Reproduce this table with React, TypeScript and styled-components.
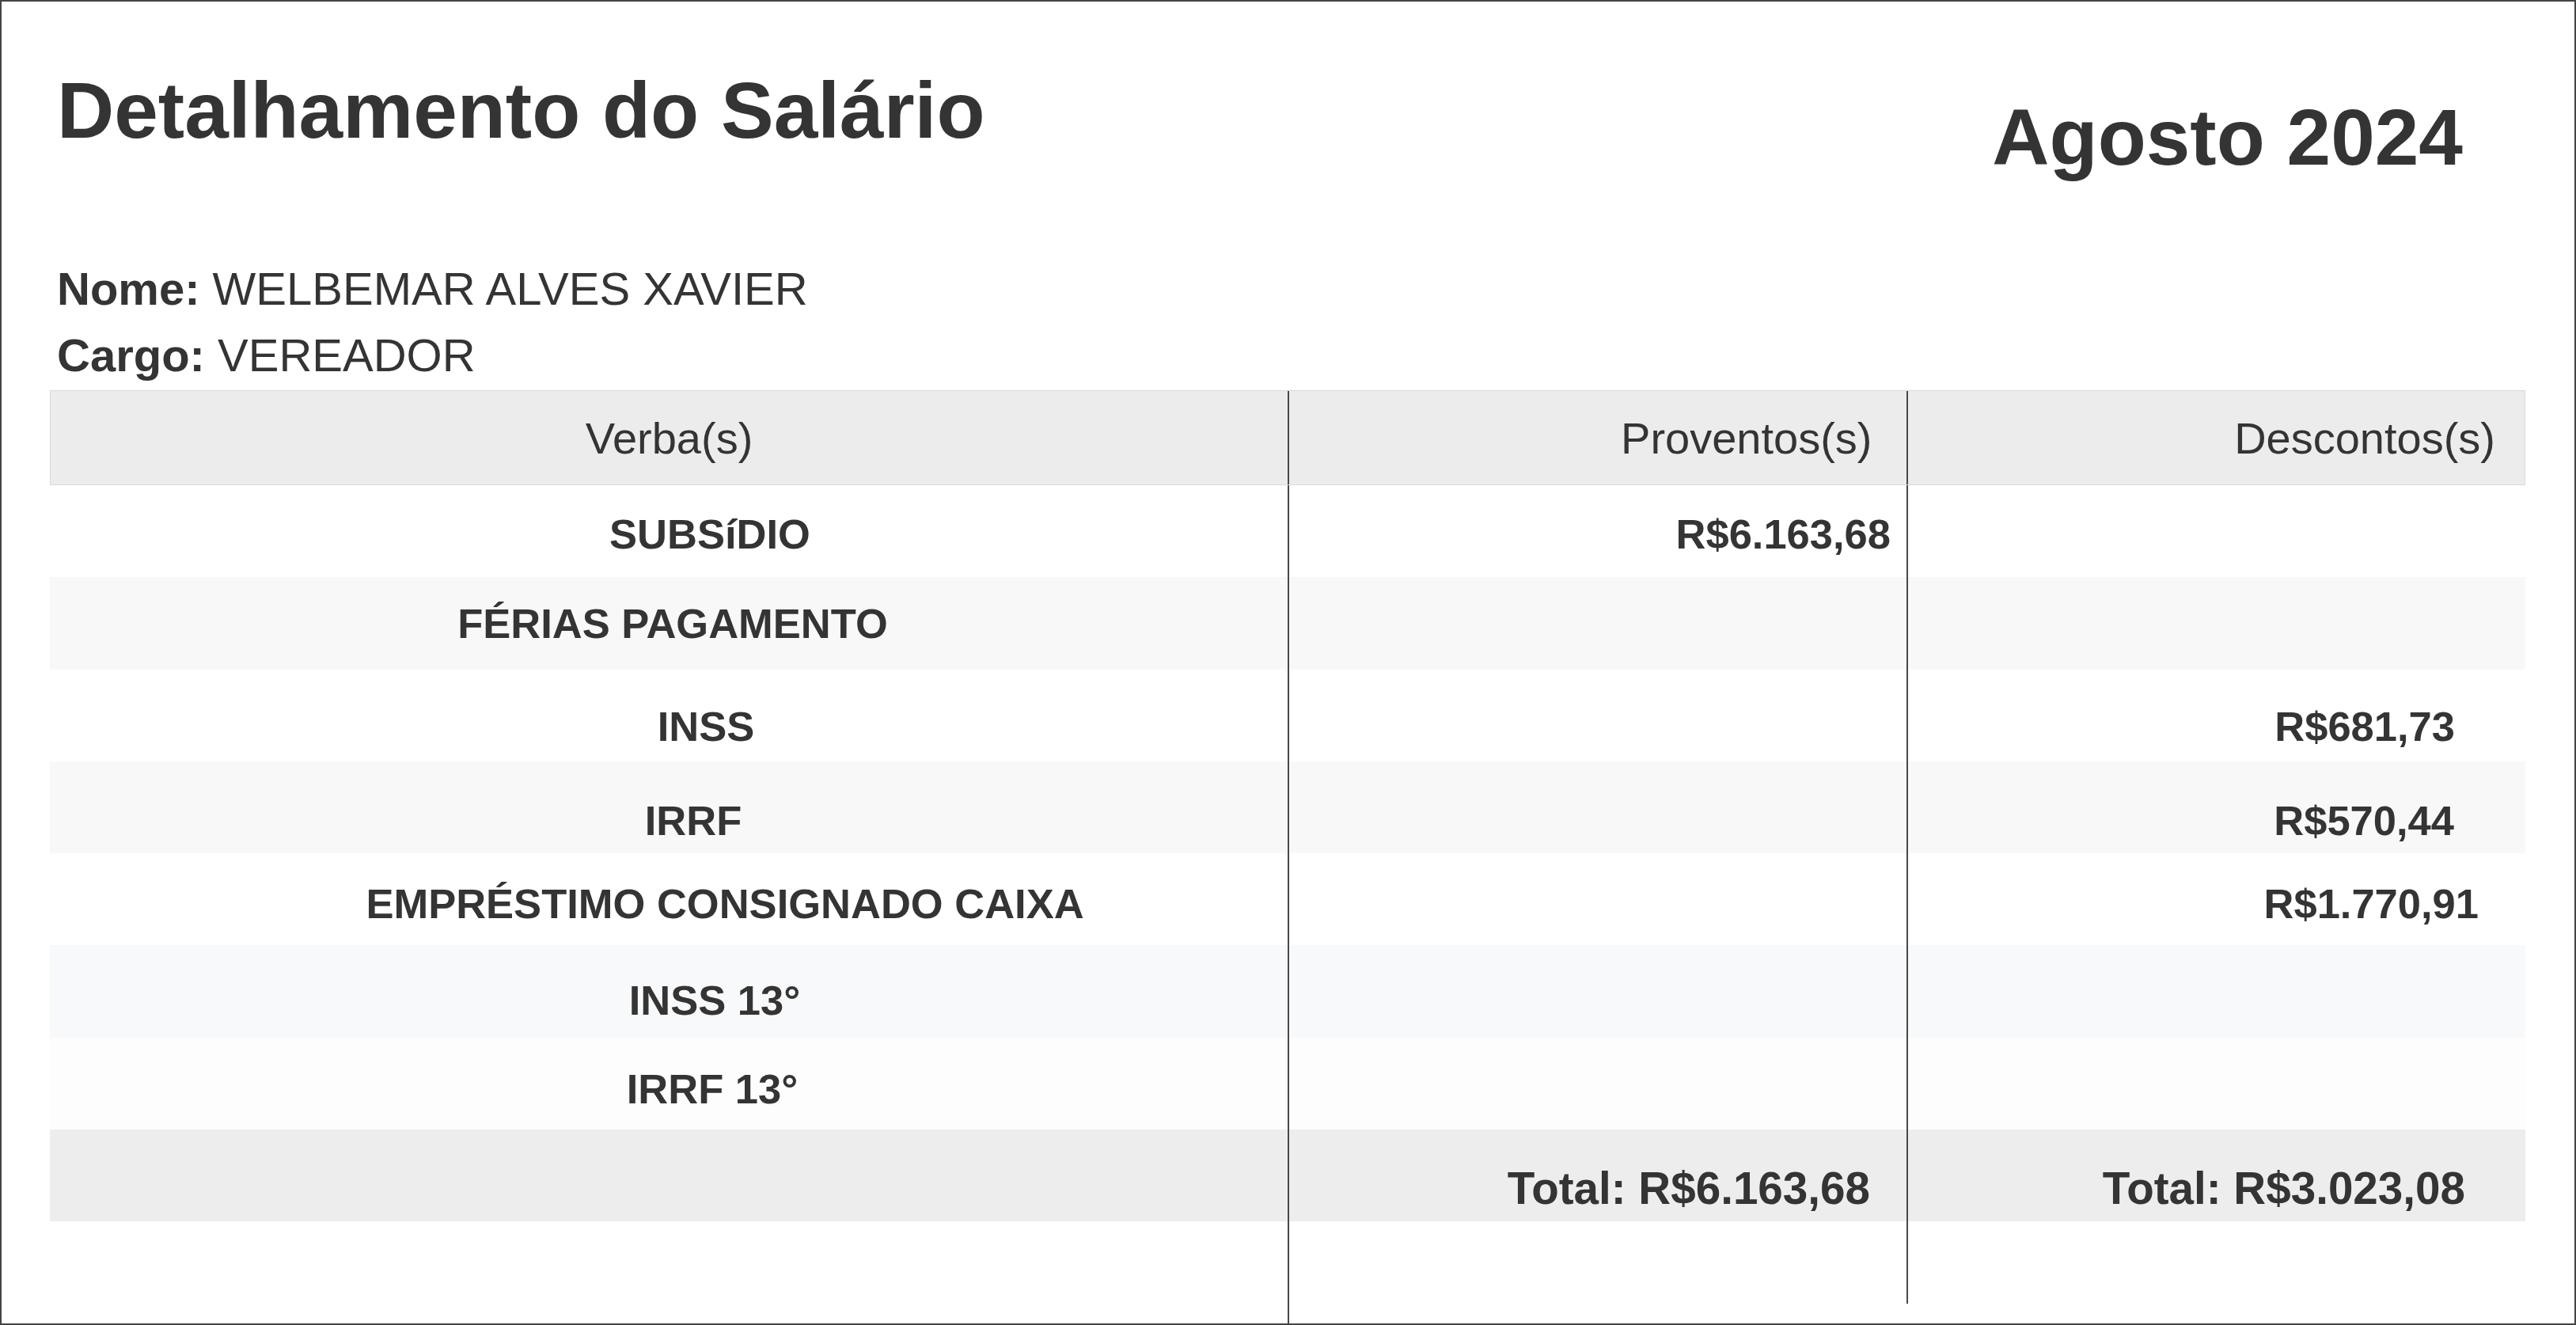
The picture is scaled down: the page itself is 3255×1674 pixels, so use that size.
import React from "react";
import styled, { createGlobalStyle } from "styled-components";

type Line = {
  verba: string;
  shift: number;
  drop: number;
  bg: string;
  prov?: string;
  provPad?: number;
  desc?: string;
  descPad?: number;
};

const lines: Line[] = [
  { verba: "SUBSíDIO", shift: 52, drop: 3, bg: "#ffffff", prov: "R$6.163,68", provPad: 20 },
  { verba: "FÉRIAS PAGAMENTO", shift: 5, drop: 0, bg: "#f8f8f8" },
  { verba: "INSS", shift: 47, drop: 14, bg: "#ffffff", desc: "R$681,73", descPad: 89 },
  { verba: "IRRF", shift: 31, drop: 17, bg: "#f8f8f8", desc: "R$570,44", descPad: 90 },
  { verba: "EMPRÉSTIMO CONSIGNADO CAIXA", shift: 71, drop: 5, bg: "#ffffff", desc: "R$1.770,91", descPad: 59 },
  { verba: "INSS 13°", shift: 58, drop: 11, bg: "#f8f9fa" },
  { verba: "IRRF 13°", shift: 55, drop: 7, bg: "#fdfdfd" },
];

const GlobalStyle = createGlobalStyle`
  * { box-sizing: border-box; }
  html, body {
    margin: 0;
    padding: 0;
    background: #fff;
  }
  body {
    font-family: "Liberation Sans", Arial, sans-serif;
    color: #343434;
  }
`;

const Page = styled.main`
  display: flex;
  flex-direction: column;
  height: 100vh;
  border: 2px solid #444;
  padding: 80px 62px 0 61px;
`;

const Heading = styled.header`
  display: flex;
  justify-content: space-between;
  align-items: flex-start;
  padding: 0 79px 0 9px;
`;

const Title = styled.h1`
  margin: 0;
  font-size: 100px;
  line-height: 115px;
  font-weight: 700;
`;

const Period = styled.h2`
  margin: 34px 0 0;
  font-size: 100px;
  line-height: 115px;
  font-weight: 700;
`;

const Info = styled.div`
  margin-top: 92px;
  padding: 0 0 2px 9px;
  font-size: 58px;
  line-height: 84px;
`;

const InfoLine = styled.p`
  margin: 0;
  white-space: nowrap;
`;

const Label = styled.strong`
  font-weight: 700;
`;

const Table = styled.section`
  display: flex;
  flex-direction: column;
`;

const Row = styled.div<{ $bg: string; $kind: "head" | "body" | "total" }>`
  display: grid;
  grid-template-columns: 2fr 1fr 1fr;
  height: ${(p) => (p.$kind === "head" ? "120px" : "116.25px")};
  background: ${(p) => p.$bg};
  border: ${(p) => (p.$kind === "head" ? "1px solid #d9d9d9" : "none")};
  font-size: ${(p) =>
    p.$kind === "body" ? "52.5px" : p.$kind === "total" ? "56.6px" : "56px"};
  font-weight: ${(p) => (p.$kind === "head" ? 400 : 700)};
`;

const Cell = styled.div<{
  $align: "center" | "right";
  $divider?: boolean;
  $shift?: number;
  $drop?: number;
  $pad?: number;
}>`
  display: flex;
  align-items: center;
  justify-content: ${(p) => (p.$align === "center" ? "center" : "flex-end")};
  border-left: ${(p) => (p.$divider ? "2px solid #484848" : "none")};
  padding: ${(p) => (p.$drop ?? 0) * 2}px ${(p) => p.$pad ?? 0}px 0
    ${(p) => (p.$shift ?? 0) * 2}px;
  white-space: nowrap;
`;

const Tail = styled.div`
  flex: 1;
  display: grid;
  grid-template-columns: 2fr 1fr 1fr;
  align-items: start;
`;

const Rule = styled.div<{ $len?: number }>`
  border-left: 2px solid #484848;
  align-self: ${(p) => (p.$len ? "start" : "stretch")};
  height: ${(p) => (p.$len ? `${p.$len}px` : "auto")};
`;

export default function App() {
  return (
    <>
      <GlobalStyle />
      <Page>
        <Heading>
          <Title>Detalhamento do Salário</Title>
          <Period>Agosto 2024</Period>
        </Heading>

        <Info>
          <InfoLine>
            <Label>Nome:</Label> WELBEMAR ALVES XAVIER
          </InfoLine>
          <InfoLine>
            <Label>Cargo:</Label> VEREADOR
          </InfoLine>
        </Info>

        <Table>
          <Row $kind="head" $bg="#ececec">
            <Cell $align="center">Verba(s)</Cell>
            <Cell $align="right" $divider $pad={43}>
              Proventos(s)
            </Cell>
            <Cell $align="right" $divider $pad={37}>
              Descontos(s)
            </Cell>
          </Row>

          {lines.map((l) => (
            <Row key={l.verba} $kind="body" $bg={l.bg}>
              <Cell $align="center" $shift={l.shift} $drop={l.drop}>
                {l.verba}
              </Cell>
              <Cell $align="right" $divider $drop={l.drop} $pad={l.provPad}>
                {l.prov}
              </Cell>
              <Cell $align="right" $divider $drop={l.drop} $pad={l.descPad}>
                {l.desc}
              </Cell>
            </Row>
          ))}

          <Row $kind="total" $bg="#ededed">
            <Cell $align="center" />
            <Cell $align="right" $divider $drop={17} $pad={46}>
              Total: R$6.163,68
            </Cell>
            <Cell $align="right" $divider $drop={17} $pad={76}>
              Total: R$3.023,08
            </Cell>
          </Row>
        </Table>

        <Tail>
          <div />
          <Rule />
          <Rule $len={104} />
        </Tail>
      </Page>
    </>
  );
}
